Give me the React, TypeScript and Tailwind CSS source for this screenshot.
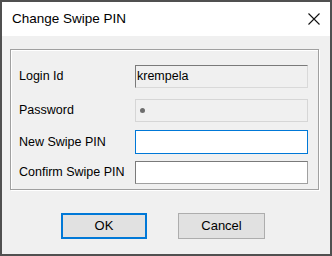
export default function App() {
  const font = { fontFamily: '"Liberation Sans", Arial, sans-serif' };
  return (
    <div
      className="w-[332px] h-[256px] border-2 border-[#505050] bg-[#f0f0f0] flex flex-col text-black"
      style={font}
    >
      {/* Title bar */}
      <div className="h-[34px] bg-white flex items-center justify-between pl-[10px] pr-[10px] shrink-0">
        <span className="text-[13.5px] leading-none">Change Swipe PIN</span>
        <svg width="12" height="12" viewBox="0 0 12 12" className="block">
          <path d="M0.5 0.5 L11.5 11.5 M11.5 0.5 L0.5 11.5" stroke="#111" strokeWidth="1.1" fill="none" />
        </svg>
      </div>

      {/* Body */}
      <div className="flex flex-col pl-[8px] pr-[11px] pt-[13px]">
        {/* Group box */}
        <div className="h-[141px] border border-[#a0a0a0] shadow-[inset_1px_1px_0_#ffffff,1px_1px_0_#ffffff] pl-[8px] pr-[10px] pt-[15px] flex flex-col text-[12.5px]">
          <div className="flex items-center h-[23px]">
            <span className="w-[116px]">Login Id</span>
            <div className="flex-1 h-full bg-[#f0f0f0] border border-[#d9d9d9] border-t-[#7a7a7a] border-l-[#7a7a7a] flex items-center pl-[1px]">
              krempela
            </div>
          </div>
          <div className="flex items-center h-[23px] mt-[11px]">
            <span className="w-[116px]">Password</span>
            <div className="flex-1 h-full bg-[#f0f0f0] border border-[#d6d6d6] flex items-center pl-[4px]">
              <span className="block w-[5px] h-[5px] rounded-full bg-[#6d6d6d]" />
            </div>
          </div>
          <div className="flex items-center h-[24px] mt-[8px]">
            <span className="w-[116px]">New Swipe PIN</span>
            <div className="flex-1 h-full bg-white border border-[#0078d7]" />
          </div>
          <div className="flex items-center h-[23px] mt-[7px]">
            <span className="w-[116px]">Confirm Swipe PIN</span>
            <div className="flex-1 h-full bg-white border border-[#7a7a7a] border-r-[#a0a0a0] border-b-[#a0a0a0]" />
          </div>
        </div>

        {/* Buttons */}
        <div className="flex mt-[23px] pl-[51px] text-[13px]">
          <button className="w-[86px] h-[26px] bg-[#e1e1e1] border-2 border-[#0078d7] flex items-center justify-center">
            OK
          </button>
          <button className="w-[87px] h-[26px] ml-[31px] bg-[#e1e1e1] border border-[#adadad] flex items-center justify-center">
            Cancel
          </button>
        </div>
      </div>
    </div>
  );
}
